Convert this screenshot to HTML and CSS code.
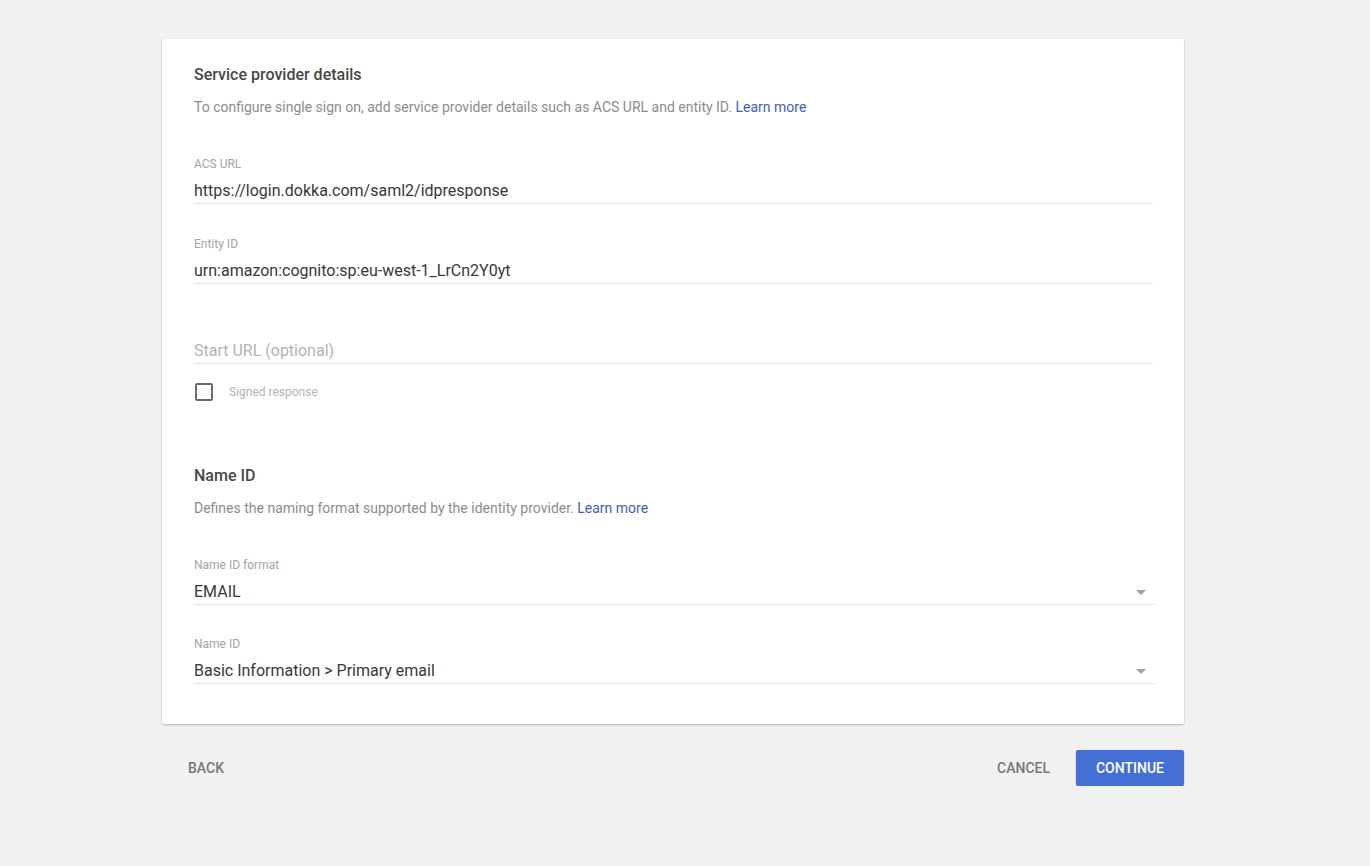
FILE: index.html
```html
<!DOCTYPE html>
<html>
<head>
<meta charset="utf-8">
<link rel="stylesheet" href="styles.css">
</head>
<body>
<div class="page">
  <div class="card">
    <div class="section-title">Service provider details</div>
    <div class="section-desc">To configure single sign on, add service provider details such as ACS URL and entity ID. <a class="link">Learn more</a></div>

    <div class="field first">
      <div class="label">ACS URL</div>
      <div class="value">https://login.dokka.com/saml2/idpresponse</div>
    </div>
    <div class="field">
      <div class="label">Entity ID</div>
      <div class="value">urn:amazon:cognito:sp:eu-west-1_LrCn2Y0yt</div>
    </div>
    <div class="field">
      <div class="label"></div>
      <div class="value placeholder">Start URL (optional)</div>
    </div>
    <div class="check-row">
      <span class="checkbox"></span>
      <span class="check-label">Signed response</span>
    </div>

    <div class="section-title second">Name ID</div>
    <div class="section-desc">Defines the naming format supported by the identity provider. <a class="link">Learn more</a></div>

    <div class="field first select">
      <div class="label">Name ID format</div>
      <div class="value">EMAIL<span class="arrow"></span></div>
    </div>
    <div class="field select tight">
      <div class="label">Name ID</div>
      <div class="value">Basic Information &gt; Primary email<span class="arrow"></span></div>
    </div>
  </div>

  <div class="actions">
    <button class="btn flat back">BACK</button>
    <div class="spacer"></div>
    <button class="btn flat">CANCEL</button>
    <button class="btn primary">CONTINUE</button>
  </div>
</div>
</body>
</html>
```
FILE: styles.css
```css
html, body {
  margin: 0;
  padding: 0;
  background: #f1f1f1;
  font-family: Roboto, "Liberation Sans", Arial, sans-serif;
}
.page {
  width: 1022px;
  margin-left: 162px;
  padding-top: 39px;
}
.card {
  background: #fff;
  border-radius: 2px;
  box-shadow: 0 1px 2px rgba(0,0,0,0.25), 0 0 1px rgba(0,0,0,0.08);
  padding: 26px 31px 40px 32px;
}
.section-title {
  font-size: 16px;
  line-height: 20px;
  font-weight: 500;
  color: #474747;
}
.section-title.second {
  margin-top: 64px;
}
.section-desc {
  margin-top: 12px;
  font-size: 14px;
  line-height: 20px;
  color: #8c8c8c;
}
.link {
  color: #3f5fb5;
  text-decoration: none;
}
.field {
  margin-top: 32px;
  border-bottom: 1px solid #e3e3e3;
}
.field.first {
  margin-top: 39px;
}
.field.tight {
  margin-top: 31px;
}
.label {
  font-size: 12px;
  line-height: 16px;
  height: 16px;
  color: #a3a3a3;
}
.value {
  margin-top: 7px;
  font-size: 16px;
  line-height: 24px;
  color: #383838;
  position: relative;
}
.value.placeholder {
  color: #b3b3b3;
}
.arrow {
  position: absolute;
  right: 9px;
  top: 10px;
  width: 0;
  height: 0;
  border-left: 5px solid transparent;
  border-right: 5px solid transparent;
  border-top: 5px solid #a0a0a0;
}
.select {
  margin-right: -2px;
}
.check-row {
  margin-top: 18px;
  display: flex;
  align-items: center;
  height: 20px;
}
.checkbox {
  width: 14px;
  height: 14px;
  border: 2px solid #6b6b6b;
  border-radius: 2px;
  margin-left: 1px;
}
.check-label {
  margin-left: 16px;
  font-size: 12px;
  color: #b3b3b3;
}
.actions {
  display: flex;
  align-items: center;
  margin-top: 26px;
}
.spacer {
  flex: 1;
}
.btn {
  font-family: Roboto, "Liberation Sans", Arial, sans-serif;
  font-size: 14px;
  font-weight: 500;
  height: 36px;
  border: none;
  border-radius: 2px;
  padding: 0 16px;
  background: transparent;
  cursor: pointer;
}
.btn.flat {
  color: #777;
}
.btn.back {
  margin-left: 10px;
}
.btn.primary {
  margin-left: 10px;
  width: 108px;
  padding: 0;
  background: #4470d6;
  color: #fff;
  box-shadow: 0 1px 2px rgba(0,0,0,0.25);
}
```
